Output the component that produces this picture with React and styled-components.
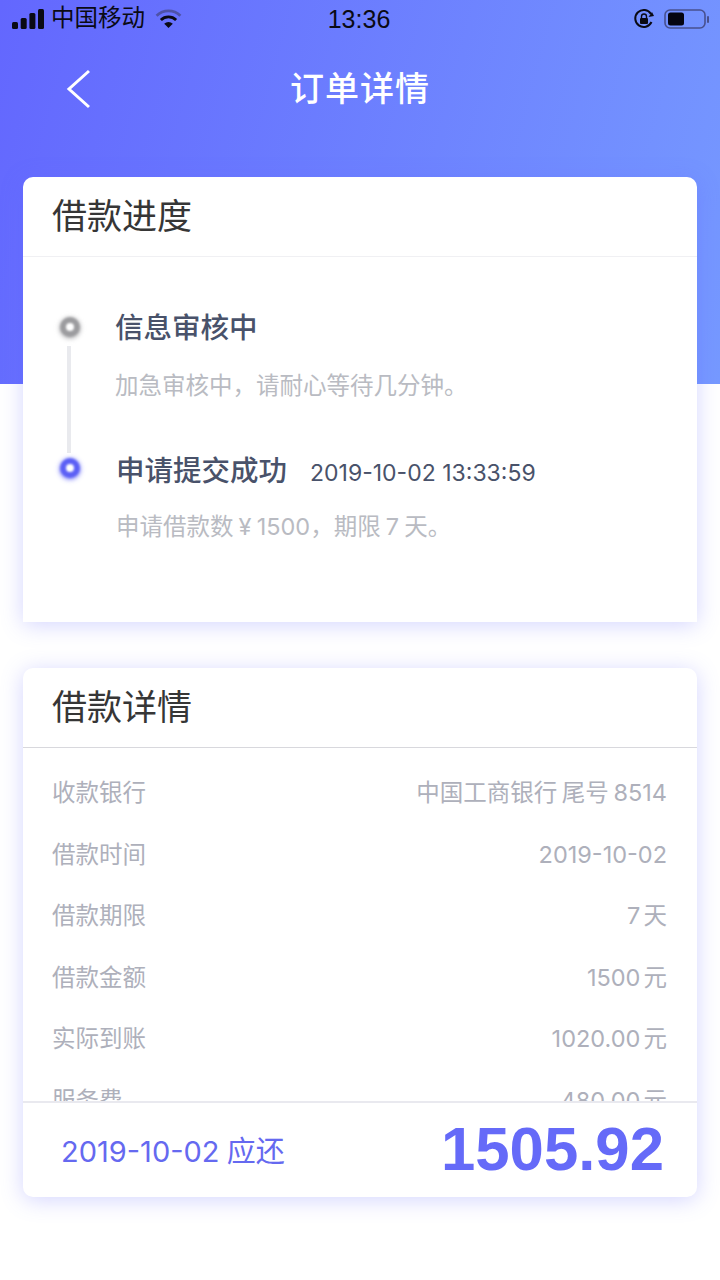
import React from 'react';
import styled, { createGlobalStyle } from 'styled-components';

const Global = createGlobalStyle`
  html, body { margin: 0; padding: 0; background: #fff; }
  * { box-sizing: border-box; }
  body { font-family: "Inter", "Noto Sans CJK SC", sans-serif; }
`;

const Page = styled.div`
  width: 720px;
  height: 1280px;
  overflow: hidden;
  background: linear-gradient(105deg, #6367fe 0%, #7699ff 100%) top left / 720px 384px no-repeat, #fff;
`;
const StatusBar = styled.div`
  height: 38px;
  padding: 0 10px 0 12px;
  display: grid;
  grid-template-columns: 1fr auto 1fr;
  align-items: center;
  color: #0a0a14;
`;
const StatusLeft = styled.div`
  display: flex;
  align-items: center;
  gap: 7px;
  font-size: 23.5px;
  line-height: 34px;
`;
const Carrier = styled.span`
  margin-top: -3px;
`;
const StatusRight = styled.div`
  display: flex;
  justify-content: flex-end;
  align-items: center;
  gap: 9px;
`;
const Clock = styled.div`
  padding-right: 4px;
  font-size: 25px;
  font-family: "Liberation Sans", sans-serif;
  line-height: 38px;
`;
const Nav = styled.div`
  height: 100px;
  padding: 2px 0 0 66px;
  display: grid;
  grid-template-columns: 26px 1fr 92px;
  align-items: center;
  color: #fff;
`;
const NavTitle = styled.div`
  text-align: center;
  font-size: 34px;
  font-weight: 500;
  letter-spacing: 1px;
  line-height: 98px;
`;
const Content = styled.div`
  padding: 39px 23px 0;
  display: flex;
  flex-direction: column;
  gap: 46px;
`;
const Card = styled.section`
  background: #fff;
  border-radius: ${p => p.$radius};
  height: ${p => p.$h}px;
  box-shadow: 0 3px 22px rgba(99, 103, 254, 0.28);
  display: flex;
  flex-direction: column;
  overflow: hidden;
`;
const CardHead = styled.h2`
  margin: 0;
  flex: none;
  height: 80px;
  padding: 0 29px;
  border-bottom: 1px solid ${p => p.$line};
  font-size: 35px;
  font-weight: 400;
  line-height: 78px;
  color: #363636;
`;
const Timeline = styled.div`
  padding: 53px 0 0 33px;
  display: flex;
  flex-direction: column;
`;
const Step = styled.div`
  display: grid;
  grid-template-columns: ${p => p.$col}px 1fr;
  height: ${p => p.$h}px;
`;
const Rail = styled.div`
  display: flex;
  flex-direction: column;
  align-items: center;
  width: 28px;
`;
const Dot = styled.span`
  flex: none;
  margin-top: ${p => p.$top}px;
  width: 20px;
  height: 20px;
  border-radius: 50%;
  background: #fff;
  border: 6px solid ${p => p.$color};
  box-shadow: 0 1px 5px ${p => p.$color};
  filter: blur(0.8px);
`;
const Connector = styled.span`
  flex: none;
  width: 4px;
  height: 107px;
  margin-top: 9px;
  margin-left: -3px;
  background: #e9eaee;
`;
const StepBody = styled.div`
  display: flex;
  flex-direction: column;
`;
const StepTitle = styled.div`
  display: flex;
  align-items: baseline;
  gap: 23px;
  height: 36px;
  line-height: 36px;
  font-size: 28.5px;
  font-weight: 500;
  color: #49526a;
`;
const StepTime = styled.span`
  font-size: 23px;
  font-weight: 400;
`;
const StepNote = styled.div`
  margin-top: ${p => p.$gap}px;
  font-size: 23.5px;
  line-height: 32px;
  color: #b9bbc2;
  word-spacing: -1.5px;
`;
const Rows = styled.div`
  flex: 1;
  min-height: 0;
  overflow: hidden;
  padding: 14px 30px 0 29px;
`;
const Row = styled.div`
  display: flex;
  justify-content: space-between;
  height: 61.5px;
  line-height: 61.5px;
  font-size: 23.5px;
  color: #aeb0bb;
`;
const RowValue = styled.span`
  word-spacing: ${p => p.$ws}px;
`;
const Footer = styled.div`
  flex: none;
  height: 96px;
  border-top: 2px solid #e9e9ef;
  padding: 0 33px 3px 38px;
  display: flex;
  align-items: center;
  justify-content: space-between;
  color: #6569f0;
`;
const DueLabel = styled.div`
  font-size: 29px;
  font-weight: 400;
  word-spacing: -1px;
`;
const DueAmount = styled.div`
  font-size: 61.7px;
  font-weight: 700;
  font-family: "Liberation Sans", sans-serif;
  color: #656af8;
`;

const rows = [
  ['收款银行', '中国工商银行 尾号 8514', -2],
  ['借款时间', '2019-10-02', 0],
  ['借款期限', '7 天', -3.5],
  ['借款金额', '1500 元', -3.5],
  ['实际到账', '1020.00 元', -3.5],
  ['服务费', '480.00 元', -3.5],
];

export default function App() {
  return (
    <Page>
      <Global />
      <StatusBar>
        <StatusLeft>
          <svg width="32" height="20" viewBox="0 0 32 20" fill="#0a0a14">
            <rect x="0" y="13" width="6" height="7" rx="1.5" />
            <rect x="8.7" y="9" width="6" height="11" rx="1.5" />
            <rect x="17.4" y="4" width="6" height="16" rx="1.5" />
            <rect x="26" y="0" width="6" height="20" rx="1.5" />
          </svg>
          <Carrier>中国移动</Carrier>
          <svg width="27" height="20" viewBox="0 0 28 21" style={{ marginLeft: 3 }}>
            <path d="M1.5 7 A18 18 0 0 1 26.5 7" fill="none" stroke="#4e52a8" strokeWidth="3" />
            <path d="M6 11.5 A11.5 11.5 0 0 1 22 11.5" fill="none" stroke="#0a0a14" strokeWidth="3" />
            <path d="M9.5 15.5 L14 20 L18.5 15.5 A6.5 6.5 0 0 0 9.5 15.5 Z" fill="#0a0a14" />
          </svg>
        </StatusLeft>
        <Clock>13:36</Clock>
        <StatusRight>
          <svg width="22" height="22" viewBox="0 0 22 22" fill="none" stroke="#0a0a14" strokeWidth="2">
            <path d="M18.5 14 A8.5 8.5 0 1 1 18 6" />
            <path d="M21 8 L15.5 9 L19 4 Z" fill="#0a0a14" stroke="none" />
            <rect x="7" y="10" width="8" height="6" rx="1" fill="#0a0a14" stroke="none" />
            <path d="M8.5 10 V8.5 a2.5 2.5 0 0 1 5 0 V10" strokeWidth="1.4" />
          </svg>
          <svg width="46" height="22" viewBox="0 0 46 22">
            <rect x="1" y="2" width="40" height="18" rx="5" fill="none" stroke="#48508f" strokeWidth="1.6" />
            <rect x="4" y="4.5" width="16" height="13" rx="2.5" fill="#050510" />
            <rect x="43" y="8" width="2" height="7" rx="1" fill="#48508f" />
          </svg>
        </StatusRight>
      </StatusBar>
      <Nav>
        <svg width="26" height="40" viewBox="0 0 26 40" fill="none" stroke="#fff" strokeWidth="3">
          <path d="M23 2 L3 20 L23 38" />
        </svg>
        <NavTitle>订单详情</NavTitle>
      </Nav>
      <Content>
        <Card $radius="10px 10px 0 0" $h={445}>
          <CardHead $line="#f0f0f3">借款进度</CardHead>
          <Timeline>
            <Step $col={59} $h={143}>
              <Rail>
                <Dot $color="#9c9c9f" $top={7} />
                <Connector />
              </Rail>
              <StepBody>
                <StepTitle>信息审核中</StepTitle>
                <StepNote $gap={24}>加急审核中，请耐心等待几分钟。</StepNote>
              </StepBody>
            </Step>
            <Step $col={60} $h={100}>
              <Rail>
                <Dot $color="#5c60f5" $top={5} />
              </Rail>
              <StepBody>
                <StepTitle>申请提交成功<StepTime>2019-10-02 13:33:59</StepTime></StepTitle>
                <StepNote $gap={22}>申请借款数 ¥ 1500，期限 7 天。</StepNote>
              </StepBody>
            </Step>
          </Timeline>
        </Card>
        <Card $radius="10px" $h={529}>
          <CardHead $line="#d8d8dd">借款详情</CardHead>
          <Rows>
            {rows.map(([k, v, ws]) => (
              <Row key={k}><span>{k}</span><RowValue $ws={ws}>{v}</RowValue></Row>
            ))}
          </Rows>
          <Footer>
            <DueLabel>2019-10-02 应还</DueLabel>
            <DueAmount>1505.92</DueAmount>
          </Footer>
        </Card>
      </Content>
    </Page>
  );
}
